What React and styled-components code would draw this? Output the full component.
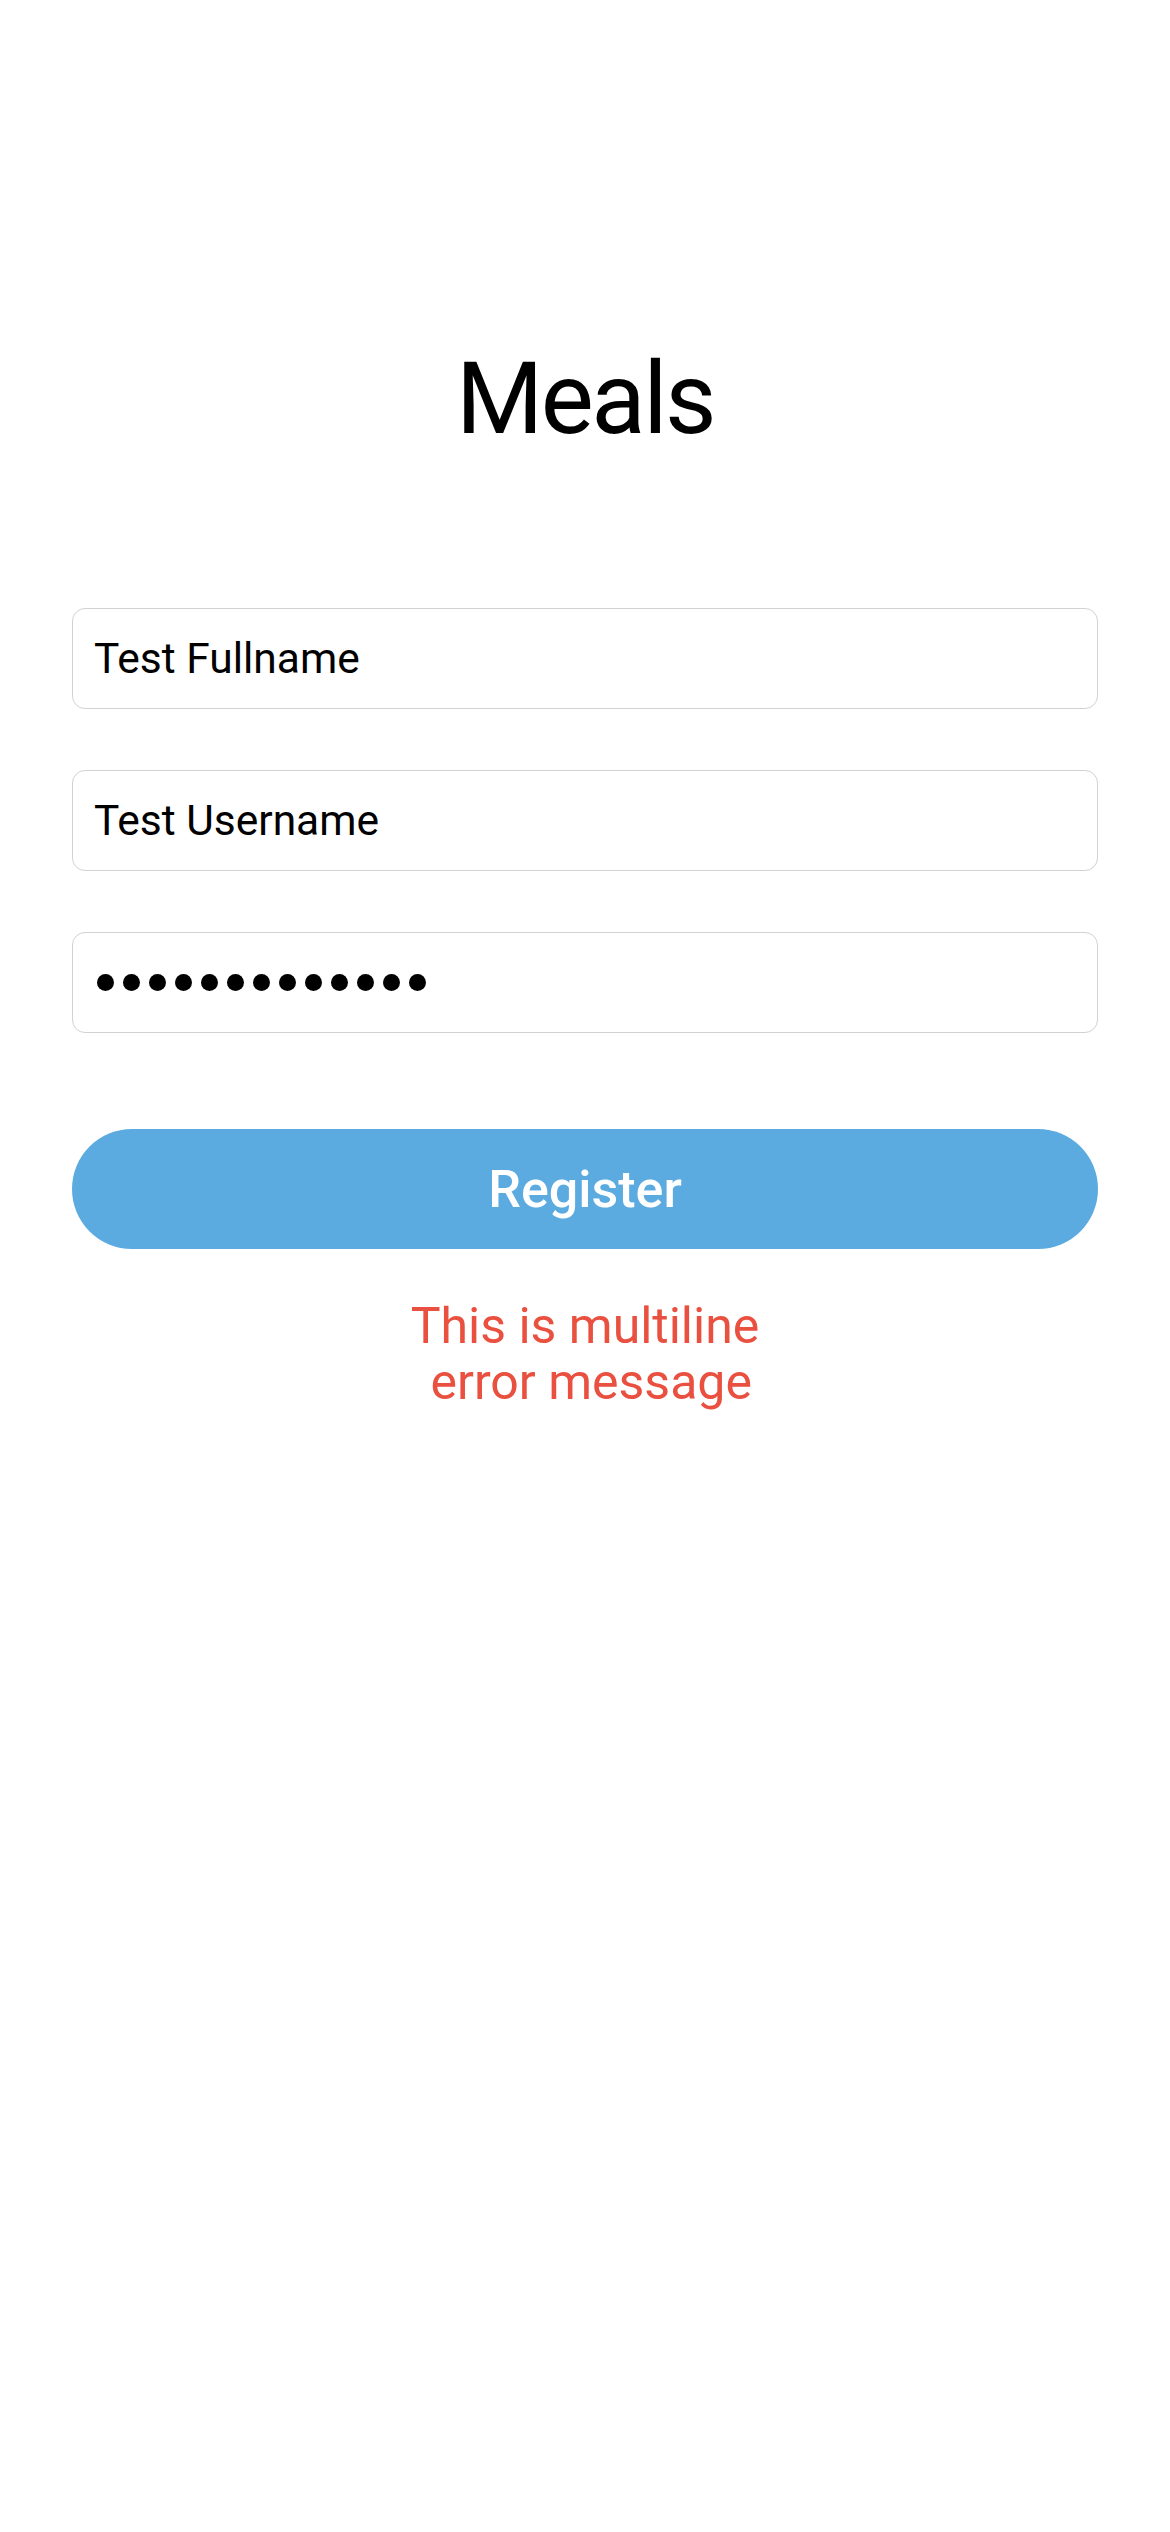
import React from "react";
import styled, { createGlobalStyle } from "styled-components";

const GlobalStyle = createGlobalStyle`
  html, body {
    margin: 0;
    padding: 0;
    background: #fff;
  }
  body {
    font-family: Roboto, "Liberation Sans", Arial, sans-serif;
    color: #000;
  }
`;

const colors = {
  border: "#d2d2d2",
  button: "#5babe1",
  error: "#e9503f",
};

const Screen = styled.div`
  min-height: 2532px;
  padding: 0 72px;
  box-sizing: border-box;
`;

const Title = styled.h1`
  margin: 0;
  padding-top: 349px;
  font-size: 100px;
  line-height: 100px;
  font-weight: 400;
  letter-spacing: -2.5px;
  text-align: center;
`;

const Form = styled.form`
  display: flex;
  flex-direction: column;
  gap: 61px;
  margin-top: 159px;
`;

const Input = styled.input`
  display: block;
  width: 100%;
  height: 101px;
  box-sizing: border-box;
  padding: 0 21px;
  border: 1.5px solid ${colors.border};
  border-radius: 13px;
  font-family: inherit;
  font-size: 42.5px;
  color: #000;
  background: #fff;
  outline: none;
`;

// password field, drawn as a row of dots
const SecretField = styled.div`
  display: flex;
  align-items: center;
  gap: 9px;
  height: 101px;
  box-sizing: border-box;
  padding: 0 24px;
  border: 1.5px solid ${colors.border};
  border-radius: 13px;
`;

const Dot = styled.span`
  width: 17px;
  height: 17px;
  border-radius: 50%;
  background: #000;
`;

const Button = styled.button`
  display: block;
  width: 100%;
  height: 120px;
  margin-top: 96px;
  border: none;
  border-radius: 60px;
  background: ${colors.button};
  color: #fff;
  font-family: inherit;
  font-size: 52px;
  font-weight: 500;
  cursor: pointer;
`;

const ErrorText = styled.p`
  margin: 49px 0 0;
  font-size: 50px;
  line-height: 56px;
  color: ${colors.error};
  text-align: center;
  white-space: pre-wrap;
`;

const App = () => {
  const password = "secretpass123";
  return (
    <Screen>
      <GlobalStyle />
      <Title>Meals</Title>
      <Form onSubmit={(e) => e.preventDefault()}>
        <Input type="text" defaultValue="Test Fullname" readOnly />
        <Input type="text" defaultValue="Test Username" readOnly />
        <SecretField>
          {password.split("").map((_, i) => (
            <Dot key={i} />
          ))}
        </SecretField>
      </Form>
      <Button type="button">Register</Button>
      <ErrorText>{"This is multiline\n error message"}</ErrorText>
    </Screen>
  );
};

export default App;
